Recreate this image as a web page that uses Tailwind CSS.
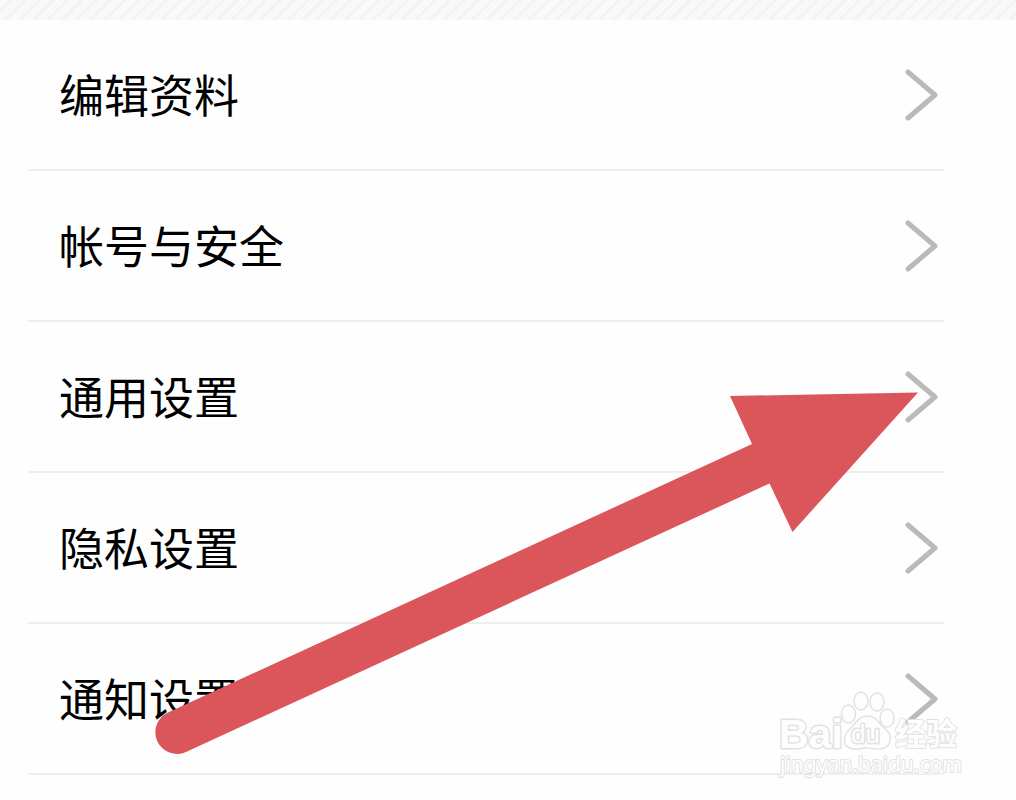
<!DOCTYPE html>
<html lang="zh-CN">
<head>
<meta charset="utf-8">
<meta name="viewport" content="width=device-width, initial-scale=1">
<title>设置</title>
<script src="https://cdn.jsdelivr.net/npm/@tailwindcss/browser@4"></script>
</head>
<body class="relative min-h-screen overflow-x-hidden bg-[#fefefe] font-['Noto_Sans_CJK_SC',sans-serif] text-black">
<svg class="hidden"><symbol id="chevron" viewBox="0 0 34 54"><path d="M4 4 L31 27 L4 50" fill="none" stroke="#bababa" stroke-width="5" stroke-linecap="round" stroke-linejoin="round"/></symbol></svg>
<div class="h-5 bg-[repeating-linear-gradient(135deg,#f9f9f9_0px,#f9f9f9_6px,#f1f1f1_8px,#f9f9f9_10px)]"></div>
<nav class="pr-18 pl-7">
  <ul>
    <li class="border-b-2 border-[#efefef]"><a href="#profile" class="flex h-[149px] items-center justify-between pr-1.5 pl-[31px] text-[45px] leading-none"><span class="pb-0.5">编辑资料</span><svg class="h-[54px] w-[34px]"><use href="#chevron"/></svg></a></li>
    <li class="border-b-2 border-[#efefef]"><a href="#account" class="flex h-[149px] items-center justify-between pr-1.5 pl-[31px] text-[45px] leading-none"><span class="pb-0.5">帐号与安全</span><svg class="h-[54px] w-[34px]"><use href="#chevron"/></svg></a></li>
    <li class="border-b-2 border-[#efefef]"><a href="#general" class="flex h-[149px] items-center justify-between pr-1.5 pl-[31px] text-[45px] leading-none"><span class="pb-0.5">通用设置</span><svg class="h-[54px] w-[34px]"><use href="#chevron"/></svg></a></li>
    <li class="border-b-2 border-[#efefef]"><a href="#privacy" class="flex h-[149px] items-center justify-between pr-1.5 pl-[31px] text-[45px] leading-none"><span class="pb-0.5">隐私设置</span><svg class="h-[54px] w-[34px]"><use href="#chevron"/></svg></a></li>
    <li class="border-b-2 border-[#efefef]"><a href="#notifications" class="flex h-[149px] items-center justify-between pr-1.5 pl-[31px] text-[45px] leading-none"><span class="pb-0.5">通知设置</span><svg class="h-[54px] w-[34px]"><use href="#chevron"/></svg></a></li>
  </ul>
</nav>
<!-- Pointer to the general settings row -->
<svg class="pointer-events-none absolute top-[392px] right-[97px] h-[363px] w-[764px]" viewBox="155 392 764 363" aria-hidden="true">
  <path fill="#db565b" d="M918 392.500 L730 396 L752 444 L168 712.500 A21.500 21.500 0 0 0 186 752 L769.500 483.500 L792.500 532 Z"/>
</svg>
<!-- Watermark -->
<svg class="pointer-events-none absolute top-[685px] right-[46px] h-[100px] w-[200px]" viewBox="770 685 200 100" fill="#fefefe" stroke="#e2e2e2" stroke-width="1.500" stroke-linejoin="round">
  <text x="779" y="748" font-family="Liberation Sans, sans-serif" font-weight="bold" font-size="41" paint-order="stroke" stroke-width="3">Bai</text>
  <g>
    <ellipse cx="848.500" cy="714" rx="7" ry="9"/>
    <ellipse cx="861" cy="701" rx="7" ry="9"/>
    <ellipse cx="877" cy="702" rx="7" ry="9"/>
    <ellipse cx="887" cy="718" rx="7" ry="9"/>
    <path d="M867 716 C859 716 856 723 851 728 C842 735 843 746 850 748 C857 751 862 747 868 748 C875 749 884 751 889 744 C893 736 888 731 882 726 C878 721 875 716 867 716 Z"/>
  </g>
  <text x="851" y="743" font-family="Liberation Sans, sans-serif" font-size="26" paint-order="stroke" stroke-width="3">du</text>
  <text x="895" y="745" font-family="Noto Sans CJK SC, sans-serif" font-weight="bold" font-size="31" paint-order="stroke" stroke-width="2">经验</text>
  <text x="780" y="772" font-family="Noto Sans, sans-serif" font-size="21" paint-order="stroke" stroke-width="2">jingyan.baidu.com</text>
</svg>
</body>
</html>
